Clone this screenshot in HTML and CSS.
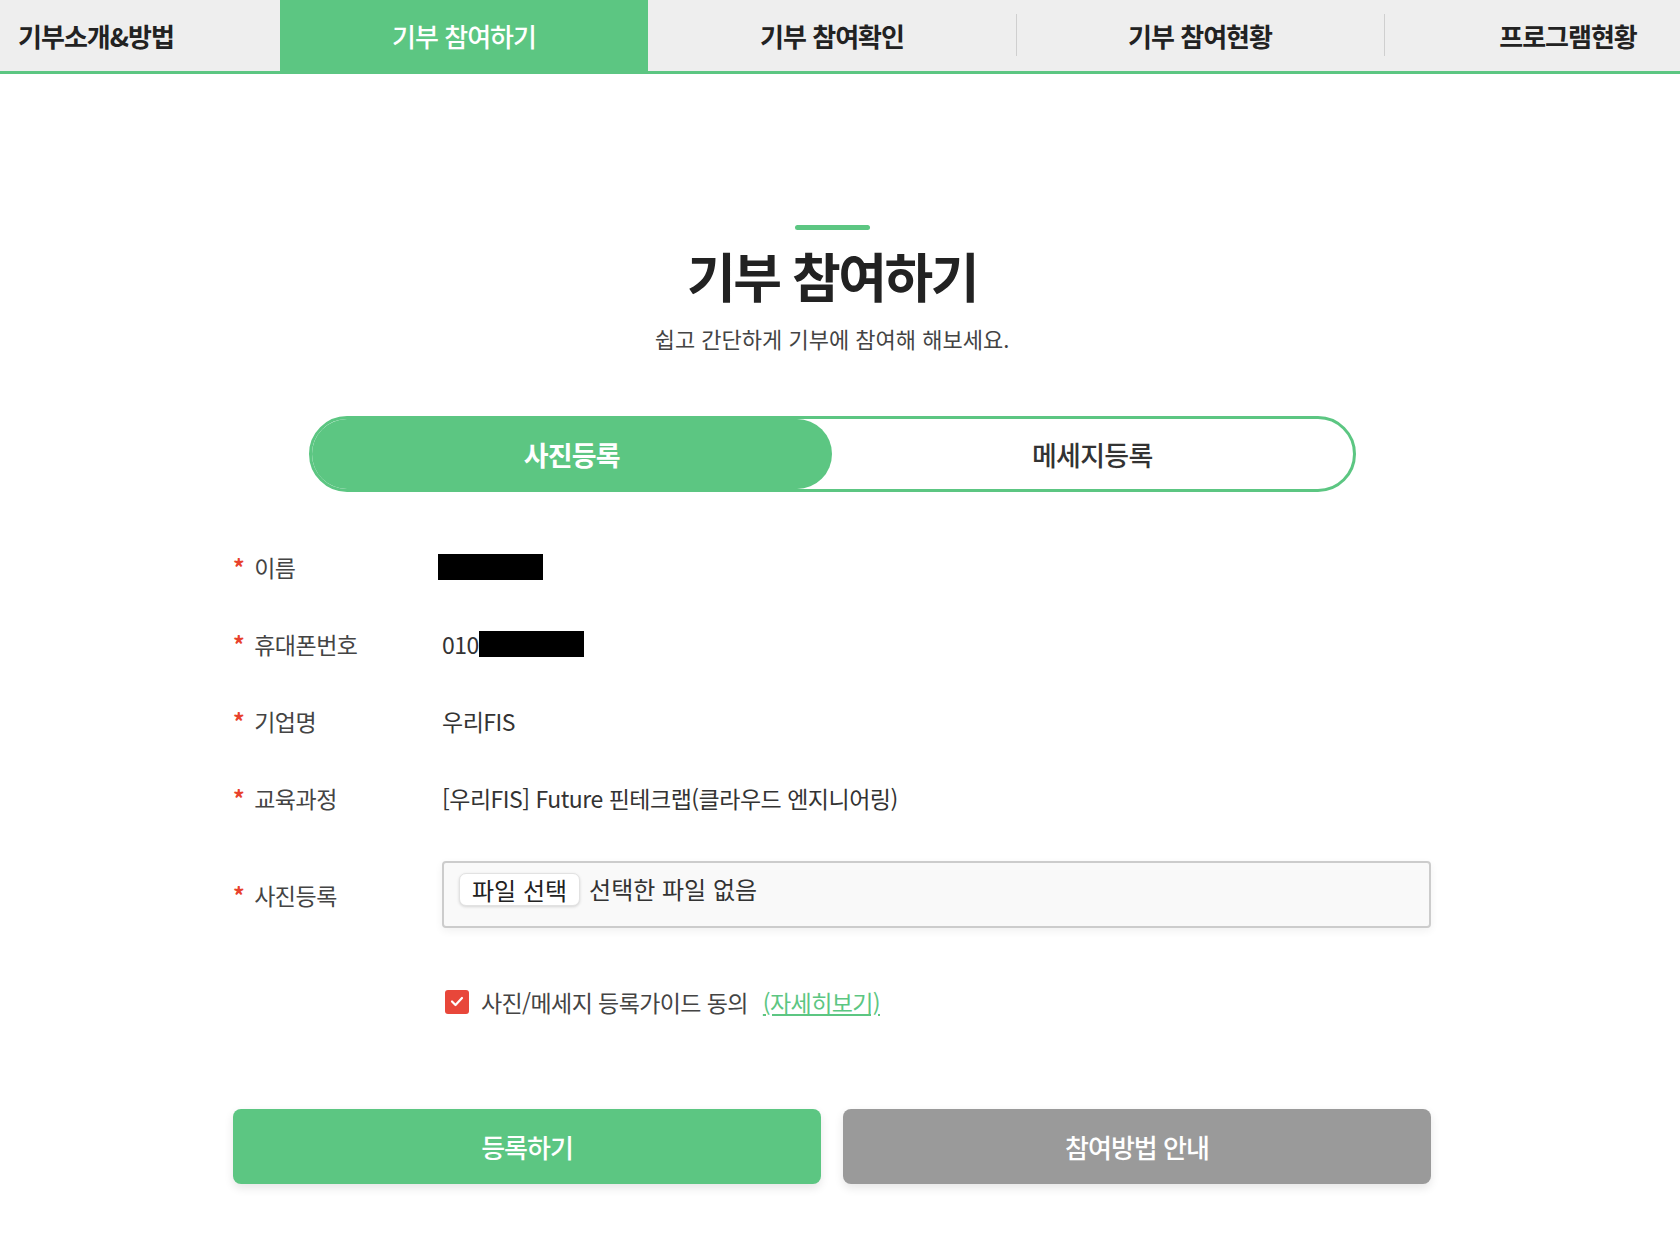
FILE: index.html
```html
<!DOCTYPE html>
<html lang="ko">
<head>
  <meta charset="UTF-8" />
  <meta name="viewport" content="width=device-width, initial-scale=1.0"/>
  <title>기부 참여하기</title>
  <link rel="stylesheet" href="styles.css">
</head>
<body>
  <div class="gnb">
    <ul class="gnb-list">
      <li class="gnb-item">기부소개&amp;방법</li>
      <li class="gnb-item on">기부 참여하기</li>
      <li class="gnb-item">기부 참여확인</li>
      <li class="gnb-item">기부 참여현황</li>
      <li class="gnb-item">프로그램현황</li>
    </ul>
  </div>

  <div class="container">
    <div class="tit-area">
      <span class="tit-bar"></span>
      <h2 class="tit">기부 참여하기</h2>
      <p class="sub-tit">쉽고 간단하게 기부에 참여해 해보세요.</p>
    </div>

    <div class="tab-pill">
      <div class="pill-item on">사진등록</div>
      <div class="pill-item">메세지등록</div>
    </div>

    <div class="form">
      <div class="form-row">
        <div class="form-label"><span class="req">*</span>이름</div>
        <div class="form-value"><span class="mask mask-name"></span></div>
      </div>
      <div class="form-row">
        <div class="form-label"><span class="req">*</span>휴대폰번호</div>
        <div class="form-value">010<span class="mask"></span></div>
      </div>
      <div class="form-row">
        <div class="form-label"><span class="req">*</span>기업명</div>
        <div class="form-value">우리FIS</div>
      </div>
      <div class="form-row">
        <div class="form-label"><span class="req">*</span>교육과정</div>
        <div class="form-value">[우리FIS] Future 핀테크랩(클라우드 엔지니어링)</div>
      </div>
      <div class="form-row row-file">
        <div class="form-label"><span class="req">*</span>사진등록</div>
        <div class="file-box">
          <span class="file-btn">파일 선택</span>
          <span class="file-name">선택한 파일 없음</span>
        </div>
      </div>
      <div class="agree-row">
        <span class="chk">
          <svg width="14" height="11" viewBox="0 0 14 11"><path d="M2 5.5 L5.5 9 L12 2" fill="none" stroke="#fff" stroke-width="2.2" stroke-linecap="round" stroke-linejoin="round"/></svg>
        </span>
        <span class="agree-txt">사진/메세지 등록가이드 동의</span>
        <a class="agree-link" href="#">(자세히보기)</a>
      </div>
    </div>

    <div class="btn-area">
      <button class="btn btn-green">등록하기</button>
      <button class="btn btn-gray">참여방법 안내</button>
    </div>
  </div>
</body>
</html>
```

FILE: styles.css
```css
body {
  margin: 0;
  font-family: "Noto Sans CJK KR", "Noto Sans", sans-serif;
  color: #333;
  background: #fff;
  overflow-x: hidden;
}

.gnb {
  width: 1680px;
  height: 71px;
  background: #eeeeee;
  border-bottom: 3px solid #5cc682;
  overflow: hidden;
}

.gnb-list {
  display: flex;
  margin: 0 0 0 -88px;
  padding: 0;
  list-style: none;
}

.gnb-item {
  flex: none;
  width: 368px;
  height: 71px;
  display: flex;
  align-items: center;
  justify-content: center;
  font-size: 26px;
  font-weight: 700;
  letter-spacing: -1px;
  color: #222;
  position: relative;
}

.gnb-item::before {
  content: "";
  position: absolute;
  left: 0;
  top: 14px;
  height: 42px;
  width: 1px;
  background: #cfcfcf;
}

.gnb-item.on {
  background: #5cc682;
  color: #fff;
  font-weight: 500;
}

.gnb-item.on::before,
.gnb-item.on + .gnb-item::before {
  display: none;
}

.container {
  width: 1664px;
  padding-bottom: 58px;
}

.tit-area {
  display: flex;
  flex-direction: column;
  align-items: center;
}

.tit-bar {
  width: 75px;
  height: 5px;
  border-radius: 3px;
  background: #5cc682;
  margin-top: 151px;
}

.tit {
  margin: 13px 0 0;
  font-size: 53px;
  line-height: 64px;
  font-weight: 700;
  letter-spacing: -2.5px;
  color: #222;
}

.sub-tit {
  margin: 15px 0 0;
  font-size: 22px;
  line-height: 32px;
  letter-spacing: 0;
  color: #444;
}

.tab-pill {
  display: flex;
  width: 1041px;
  height: 70px;
  margin: 62px auto 0;
  border: 3px solid #5cc682;
  border-radius: 40px;
}

.pill-item {
  flex: 1;
  display: flex;
  align-items: center;
  justify-content: center;
  border-radius: 40px;
  font-size: 27px;
  font-weight: 500;
  letter-spacing: -0.7px;
  color: #333;
}

.pill-item.on {
  background: #5cc682;
  color: #fff;
  font-weight: 700;
  letter-spacing: -0.8px;
}

.form {
  width: 1198px;
  margin: 36px auto 0;
}

.form-row {
  display: flex;
  align-items: center;
  height: 77px;
}

.form-label {
  flex: none;
  width: 209px;
  font-size: 23px;
  letter-spacing: -0.5px;
  color: #444;
}

.req {
  color: #e8412c;
  font-weight: 700;
  margin-right: 10px;
}

.form-value {
  display: flex;
  align-items: center;
  font-size: 23px;
  letter-spacing: -0.5px;
  color: #333;
}

.mask {
  display: inline-block;
  width: 105px;
  height: 26px;
  background: #000;
}

.mask-name {
  margin-left: -4px;
}

.row-file {
  height: 67px;
  margin-top: 25px;
}

.file-box {
  flex: 1;
  height: 67px;
  box-sizing: border-box;
  padding: 10px 15px;
  background: #f9f9f9;
  border: 2px solid #cccccc;
  border-radius: 4px;
  box-shadow: 0 3px 8px rgba(0,0,0,0.06);
  display: flex;
  align-items: flex-start;
  font-size: 24px;
  letter-spacing: 0;
  color: #333;
}

.file-btn {
  height: 33px;
  padding: 0 12px;
  box-sizing: border-box;
  display: flex;
  align-items: center;
  background: #fff;
  border: 1px solid #e2e2e2;
  border-radius: 7px;
  box-shadow: 0 1px 3px rgba(0,0,0,0.15);
  color: #222;
}

.file-name {
  margin-left: 9px;
  line-height: 31px;
}

.agree-row {
  display: flex;
  align-items: center;
  margin: 61px 0 0 212px;
  height: 25px;
  font-size: 23px;
  letter-spacing: -0.6px;
}

.chk {
  width: 24px;
  height: 24px;
  border-radius: 3px;
  background: #e8473a;
  display: flex;
  align-items: center;
  justify-content: center;
  margin-right: 12px;
}

.agree-txt {
  color: #444;
}

.agree-link {
  margin-left: 15px;
  color: #5cc682;
  text-decoration: underline;
}

.btn-area {
  display: flex;
  gap: 22px;
  width: 1198px;
  margin: 95px auto 0;
}

.btn {
  flex: 1;
  height: 75px;
  border: 0;
  border-radius: 8px;
  font-family: inherit;
  font-size: 26px;
  font-weight: 500;
  letter-spacing: -1px;
  color: #fff;
  box-shadow: 0 4px 10px rgba(0,0,0,0.1);
}

.btn-green {
  background: #5cc682;
}

.btn-gray {
  background: #9a9a9a;
}
```
